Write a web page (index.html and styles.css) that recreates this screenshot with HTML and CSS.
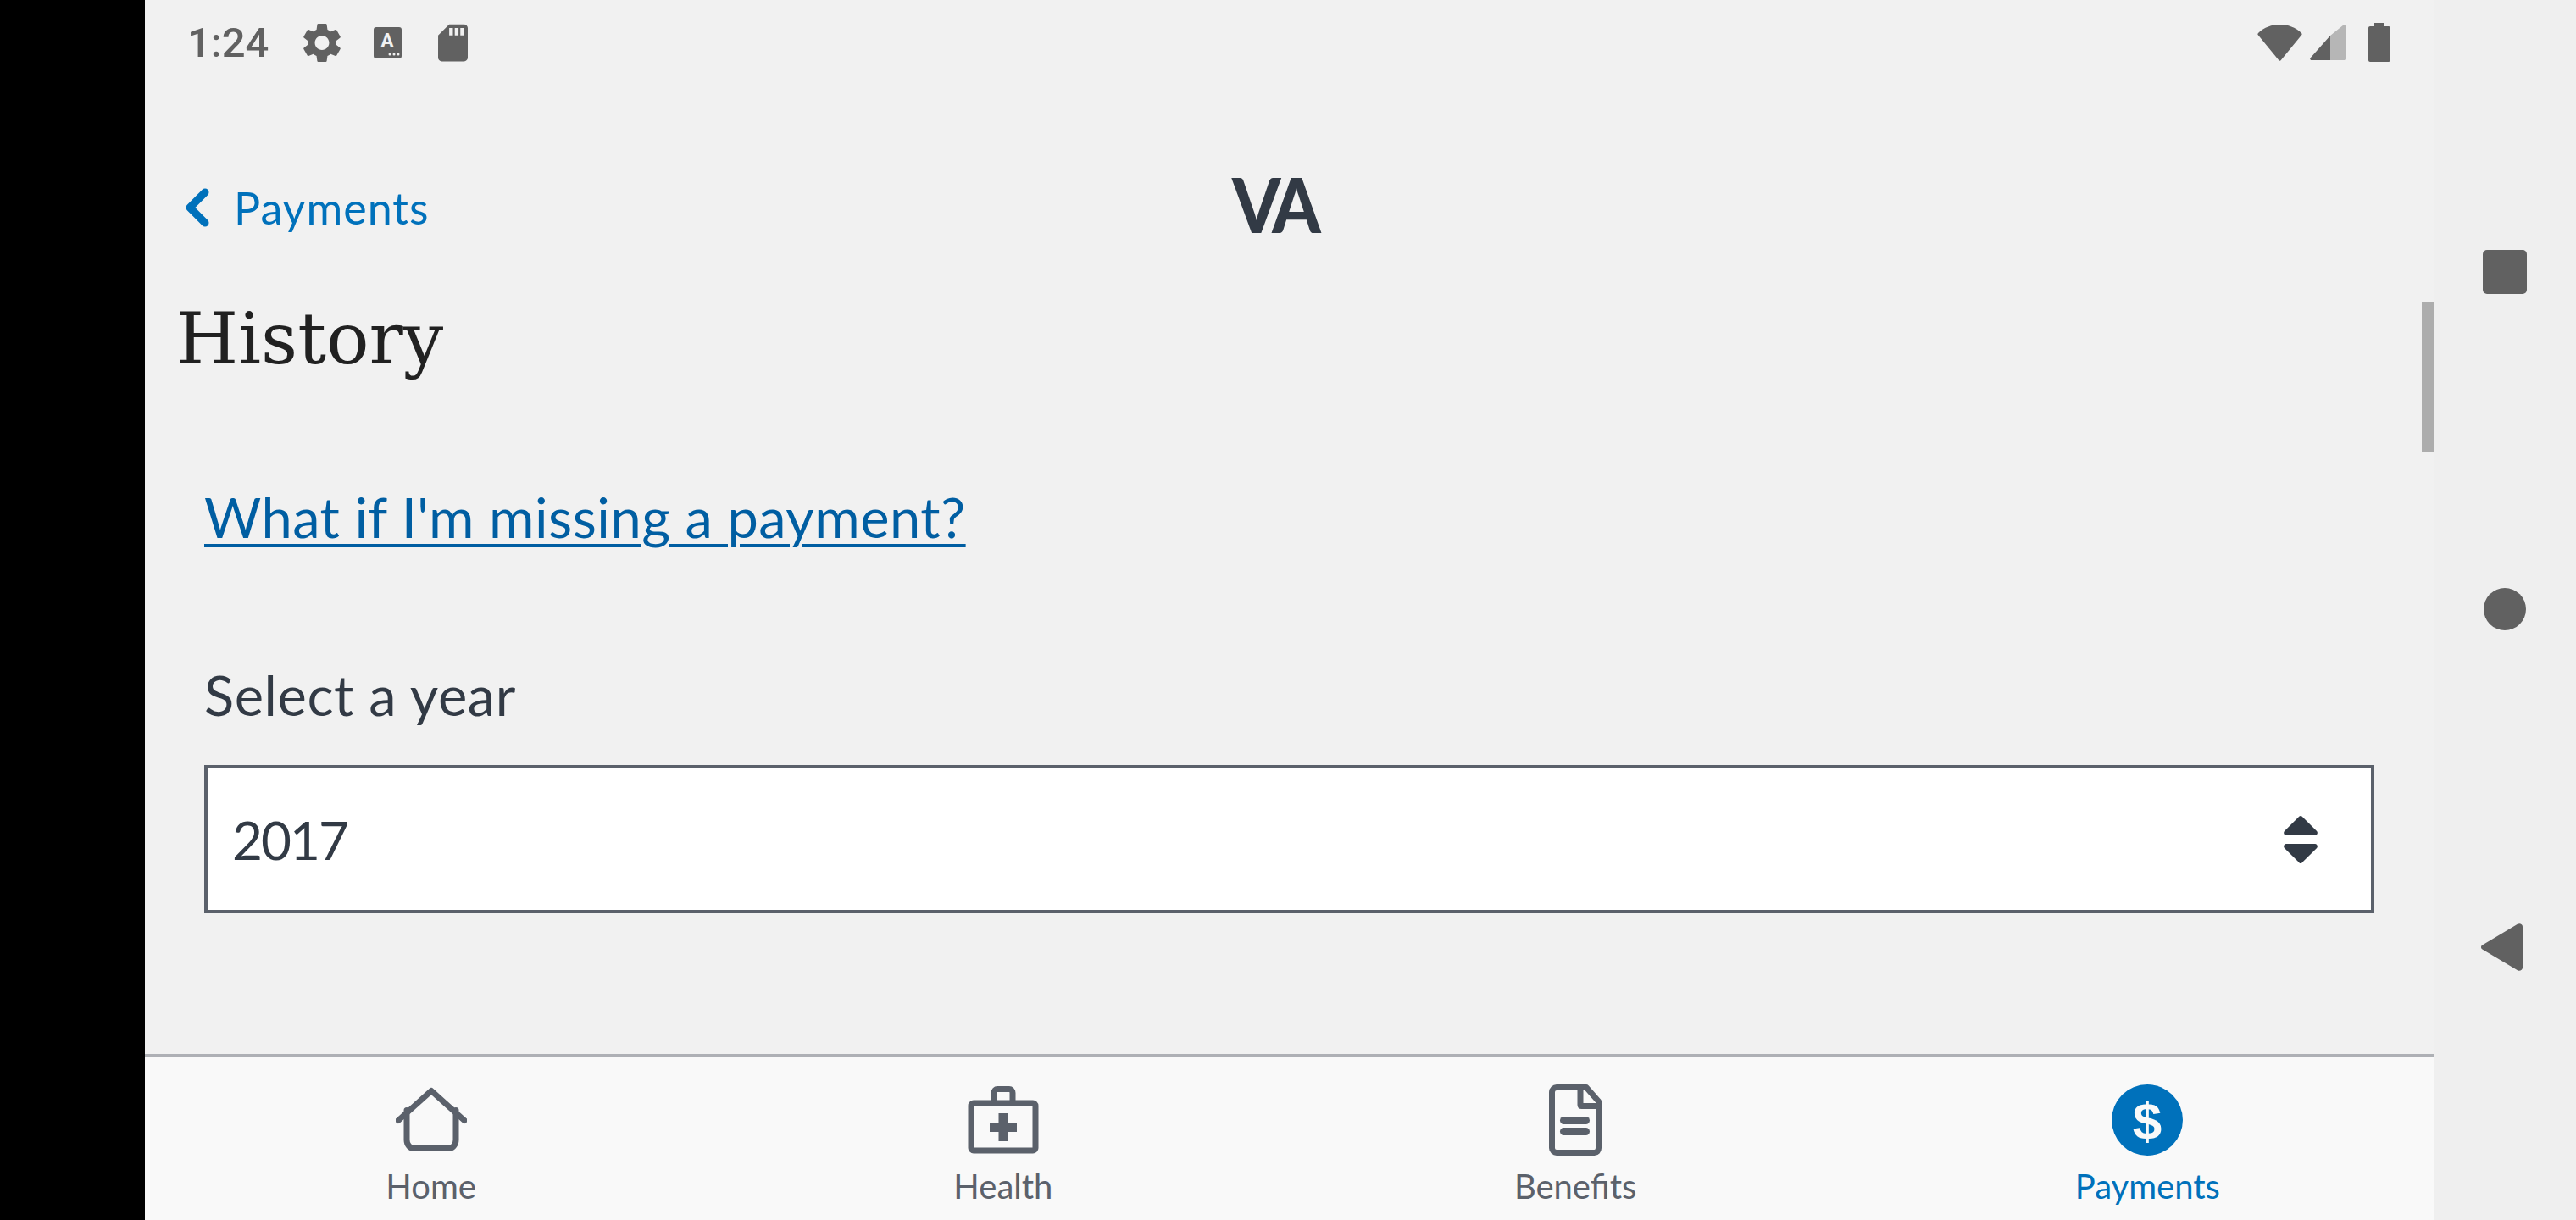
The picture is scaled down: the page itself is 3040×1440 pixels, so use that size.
FILE: index.html
```html
<!DOCTYPE html>
<html lang="en">
  <head>
    <meta charset="UTF-8" />
    <title>VA Payments History</title>
    <link rel="stylesheet" href="styles.css">
  </head>
  <body>
    <div class="left-edge"></div>

    <main class="app">
      <div class="status">
        <span class="time">1:24</span>
        <svg class="ic-gear" viewBox="2.6 2.6 18.8 18.8"><path d="M19.14 12.94c.04-.3.06-.61.06-.94 0-.32-.02-.64-.07-.94l2.03-1.58c.18-.14.23-.41.12-.61l-1.92-3.32c-.12-.22-.37-.29-.59-.22l-2.39.96c-.5-.38-1.03-.7-1.62-.94l-.36-2.54c-.04-.24-.24-.41-.48-.41h-3.84c-.24 0-.43.17-.47.41l-.36 2.54c-.59.24-1.13.57-1.62.94l-2.39-.96c-.22-.08-.47 0-.59.22L2.74 8.87c-.12.21-.08.47.12.61l2.03 1.58c-.05.3-.09.63-.09.94s.02.64.07.94l-2.03 1.58c-.18.14-.23.41-.12.61l1.92 3.32c.12.22.37.29.59.22l2.39-.96c.5.38 1.03.7 1.62.94l.36 2.54c.05.24.24.41.48.41h3.84c.24 0 .44-.17.47-.41l.36-2.54c.59-.24 1.13-.56 1.62-.94l2.39.96c.22.08.47 0 .59-.22l1.92-3.32c.12-.22.07-.47-.12-.61l-2.01-1.58zM12 15.6c-1.98 0-3.6-1.62-3.6-3.6s1.62-3.6 3.6-3.6 3.6 1.62 3.6 3.6-1.62 3.6-3.6 3.6z"/></svg>
        <svg class="ic-a" viewBox="0 0 33 37">
          <rect width="33" height="37" rx="3"/>
          <text class="ic-a-letter" x="16" y="24">A</text>
          <circle class="ic-a-dot" cx="19" cy="32" r="1.5"/>
          <circle class="ic-a-dot" cx="24" cy="32" r="1.5"/>
          <circle class="ic-a-dot" cx="29" cy="32" r="1.5"/>
        </svg>
        <svg class="ic-sd" viewBox="4 2 16 20"><path d="M18 2h-8L4.02 8 4 20c0 1.1.9 2 2 2h12c1.1 0 2-.9 2-2V4c0-1.1-.9-2-2-2zm-6 6h-2V4h2v4zm3 0h-2V4h2v4zm3 0h-2V4h2v4z"/></svg>
        <div class="status-right">
          <svg class="ic-wifi" viewBox="0 0 53 43"><path d="M1 10C8 3 17 0 26.500 0S45 3 52 10c.8.8.8 1.600.2 2.300L28 41.800c-.8 1.300-2.200 1.300-3 0L.8 12.300C.2 11.600.2 10.800 1 10z"/></svg>
          <svg class="ic-signal" viewBox="0 0 42 42"><path class="dim" d="M24 13 39.500.6c1-.8 2.500-.2 2.500 1V40.500c0 .8-.7 1.500-1.500 1.500H24z"/><path d="M24 13V42H2c-1.600 0-2.400-1.600-1.300-2.700z"/></svg>
          <svg class="ic-battery" viewBox="0 0 26 46"><path d="M7 0h12v4h5c1.100 0 2 .9 2 2v38c0 1.100-.9 2-2 2H2c-1.100 0-2-.9-2-2V6c0-1.100.9-2 2-2h5z"/></svg>
        </div>
      </div>

      <header class="topbar">
        <a class="back" href="#">
          <svg class="ic-back" viewBox="0 0 29 46"><path d="M24 5 6 23l18 18"/></svg>
          <span>Payments</span>
        </a>
        <div class="logo">VA</div>
      </header>

      <section class="content">
        <h1>History</h1>
        <div class="body">
          <a class="help" href="#">What if I'm missing a payment?</a>
          <div class="year-label">Select a year</div>
          <div class="year-select">
            <span>2017</span>
            <svg class="ic-updown" viewBox="0 0 40 56"><path d="M20 0c.6 0 1.100.2 1.500.6l17.600 17.300c1.600 1.800.6 5.100-2.100 5.100H3c-2.700 0-3.700-3.300-2.100-5.100L18.500.6C18.900.2 19.400 0 20 0zM3 33h34c2.700 0 3.700 3.300 2.100 5.100L21.500 55.400c-.8.800-2.200.8-3 0L.9 38.100C-.7 36.300.3 33 3 33z"/></svg>
          </div>
        </div>
      </section>

      <nav class="tabs">
        <a class="tab" href="#">
          <svg class="ic-home" viewBox="0 0 84 75"><path class="line" d="M3 38 42 3l39 35" /><path class="line" d="M13 26V61c0 6 4 10 9 10H62c5 0 9-4 9-10V26"/></svg>
          <span>Home</span>
        </a>
        <a class="tab" href="#">
          <svg class="ic-health" viewBox="0 0 84 80"><path class="line" d="M31 19V8c0-3 2-4.500 4-4.500h14c2 0 4 1.500 4 4.500v11"/><rect class="line" x="4" y="20" width="76" height="56" rx="3"/><path class="plus" d="M36.500 32h11v11H58v11H47.500v11h-11V54H26V43h10.500z"/></svg>
          <span>Health</span>
        </a>
        <a class="tab" href="#">
          <svg class="ic-doc" viewBox="0 0 62 84"><path class="line" d="M9 3.500H44L58.500 20V75c0 3-2 5.500-5 5.500H9c-3 0-5.500-2.500-5.500-5.500V9c0-3 2.500-5.500 5.500-5.500z"/><path class="line" d="M37 4V24c0 1 .6 1.500 1.500 1.500H58"/><rect class="bar" x="13" y="38" width="35" height="9" rx="4.500"/><rect class="bar" x="13" y="51" width="35" height="9" rx="4.500"/></svg>
          <span>Benefits</span>
        </a>
        <a class="tab tab-active" href="#">
          <svg class="ic-pay" viewBox="0 0 84 84"><circle cx="42" cy="42" r="42"/><text class="dollar" x="42" y="64">$</text></svg>
          <span>Payments</span>
        </a>
      </nav>

      <div class="scrollbar"></div>
    </main>

    <aside class="sysnav">
      <div class="sys-square"></div>
      <div class="sys-circle"></div>
      <svg class="sys-back" viewBox="0 0 49 56"><path d="M1.500 25.500 43 .8c2.500-1.500 6 0 6 3V52c0 3-3.500 4.600-6 3.200L1.500 30.500c-2-1.200-2-3.800 0-5z"/></svg>
    </aside>
  </body>
</html>
```

FILE: styles.css
```css
* {
  box-sizing: border-box;
}

body {
  margin: 0;
  width: 3040px;
  height: 1440px;
  overflow: hidden;
  display: flex;
  font-family: Lato, "Noto Sans", sans-serif;
  background-color: #f1f1f1;
}

a {
  text-decoration: none;
}

svg {
  display: block;
  flex: none;
}

.left-edge {
  width: 171px;
  background-color: #000;
}

.app {
  position: relative;
  width: 2701px;
  display: flex;
  flex-direction: column;
}

/* status bar */
.status {
  height: 100px;
  display: flex;
  align-items: center;
  padding: 0 51px 0 50px;
  fill: #616161;
}

.time {
  font-family: Roboto, sans-serif;
  font-weight: 500;
  font-size: 49px;
  color: #616161;
  width: 137px;
}

.ic-gear {
  width: 44px;
  height: 45px;
}

.ic-a {
  width: 33px;
  height: 37px;
  margin-left: 39px;
}

.ic-a-letter {
  font-family: Roboto, sans-serif;
  font-weight: 700;
  font-size: 23px;
  text-anchor: middle;
  fill: #f1f1f1;
}

.ic-a-dot {
  fill: #f1f1f1;
}

.ic-sd {
  width: 35px;
  height: 45px;
  margin-left: 43px;
}

.status-right {
  margin-left: auto;
  display: flex;
  align-items: center;
}

.ic-wifi {
  width: 53px;
  height: 43px;
}

.ic-signal {
  width: 42px;
  height: 42px;
  margin-left: 9px;
}

.ic-signal .dim {
  fill: #b6b6b6;
}

.ic-battery {
  width: 26px;
  height: 46px;
  margin-left: 27px;
}

/* header with back link and logo */
.topbar {
  height: 194px;
  padding: 96px 0 0 47px;
  display: flex;
  align-items: center;
}

.back {
  display: flex;
  align-items: center;
  width: 1236px;
  color: #0071bb;
  font-size: 52px;
  letter-spacing: 1px;
}

.ic-back {
  width: 29px;
  height: 46px;
  margin-right: 29px;
  fill: none;
  stroke: #0071bb;
  stroke-width: 9;
  stroke-linecap: round;
  stroke-linejoin: round;
}

.logo {
  font-weight: 900;
  font-size: 89px;
  line-height: 64px;
  letter-spacing: -6px;
  color: #323a45;
  transform: scaleX(0.92);
  transform-origin: left center;
  margin-top: -8px;
}

/* page content */
.content {
  flex: 1;
}

h1 {
  margin: 56px 0 0 37px;
  font-family: "DejaVu Serif", serif;
  font-weight: 400;
  font-size: 84px;
  line-height: 100px;
  color: #212121;
}

.body {
  padding: 118px 0 0 70px;
}

.help {
  display: inline-block;
  font-size: 65px;
  letter-spacing: 0.47px;
  line-height: 84px;
  color: #005ea2;
  text-decoration: underline;
  text-decoration-thickness: 4px;
  text-underline-offset: 7px;
}

.year-label {
  margin-top: 126px;
  font-size: 65px;
  letter-spacing: 0.6px;
  line-height: 84px;
  color: #323a45;
}

.year-select {
  margin-top: 41px;
  width: 2561px;
  height: 175px;
  padding: 0 63px 0 29px;
  border: 4px solid #5b616b;
  background-color: #fff;
  display: flex;
  align-items: center;
  justify-content: space-between;
  font-size: 62px;
  letter-spacing: -2px;
  color: #323a45;
}

.ic-updown {
  width: 40px;
  height: 56px;
  fill: #323a45;
}

/* bottom tabs */
.tabs {
  height: 196px;
  border-top: 4px solid #aeb0b5;
  background-color: #f9f9f9;
  display: grid;
  grid-template-columns: repeat(4, 1fr);
}

.tab {
  display: flex;
  flex-direction: column;
  align-items: center;
  color: #5b616b;
  font-size: 40px;
  line-height: 50px;
}

.tab svg {
  margin-top: 32px;
  height: 84px;
}

.tab span {
  margin-top: 11px;
}

.line {
  fill: none;
  stroke: #5b616b;
  stroke-width: 7;
  stroke-linecap: round;
  stroke-linejoin: round;
}

.plus,
.bar {
  fill: #5b616b;
}

.ic-home {
  width: 84px;
}

.ic-health {
  width: 84px;
}

.ic-doc {
  width: 62px;
}

.ic-pay {
  width: 84px;
  fill: #0071bb;
}

.dollar {
  font-family: "Liberation Sans", sans-serif;
  font-weight: 700;
  font-size: 62px;
  text-anchor: middle;
  fill: #f9f9f9;
}

.tab-active {
  color: #0071bb;
}

.scrollbar {
  position: absolute;
  top: 357px;
  right: 0;
  width: 14px;
  height: 176px;
  background-color: #adadad;
}

/* android system nav */
.sysnav {
  width: 168px;
  padding: 295px 0 294px;
  background-color: #efefef;
  display: flex;
  flex-direction: column;
  align-items: center;
  justify-content: space-between;
}

.sys-square {
  width: 52px;
  height: 52px;
  border-radius: 5px;
  background-color: #616161;
}

.sys-circle {
  width: 50px;
  height: 50px;
  border-radius: 50%;
  background-color: #616161;
}

.sys-back {
  width: 49px;
  height: 56px;
  margin-right: 8px;
  fill: #616161;
}
```
